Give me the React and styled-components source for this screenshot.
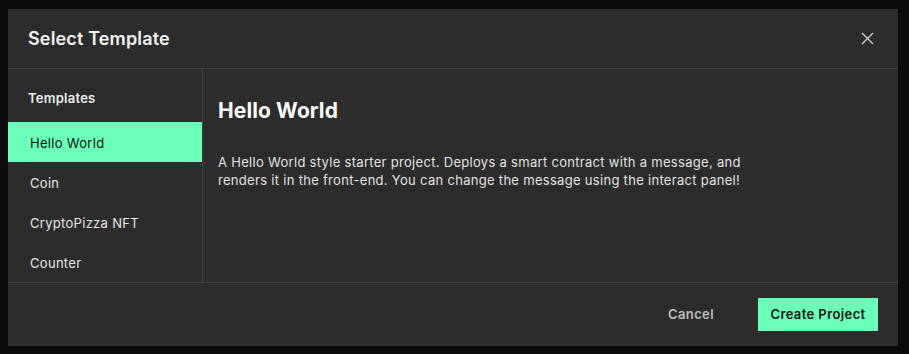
import React from "react";
import styled, { createGlobalStyle } from "styled-components";

const Global = createGlobalStyle`
  *, *::before, *::after { box-sizing: border-box; }
  html, body { margin: 0; padding: 0; background: #0a0a0a; }
  body { font-family: Inter, "Noto Sans", sans-serif; -webkit-font-smoothing: antialiased; }
`;

const Page = styled.div`
  width: 909px;
  height: 354px;
  padding: 9px 11px 8px 8px;
  background: #0a0a0a;
`;

const Modal = styled.div`
  width: 890px;
  height: 337px;
  background: #2c2c2c;
  display: flex;
  flex-direction: column;
  color: #fff;
`;

const Header = styled.div`
  height: 60px;
  flex: none;
  display: flex;
  align-items: center;
  justify-content: space-between;
  padding: 0 21px 1px 20px;
  border-bottom: 1px solid #3f3f3f;
`;

const Title = styled.h2`
  margin: 0;
  font-size: 18px;
  font-weight: 600;
  letter-spacing: 0.15px;
  color: #f2f2f2;
`;

const Close = styled.button`
  background: none;
  border: none;
  padding: 0;
  width: 20px;
  height: 20px;
  display: flex;
  align-items: center;
  justify-content: center;
  cursor: pointer;
`;

const Body = styled.div`
  flex: 1;
  display: flex;
  min-height: 0;
`;

const Sidebar = styled.nav`
  width: 195px;
  flex: none;
  border-right: 1px solid #3f3f3f;
  display: flex;
  flex-direction: column;
  padding-top: 19px;
`;

const SideLabel = styled.div`
  font-size: 13px;
  font-weight: 600;
  letter-spacing: 0.25px;
  color: #ececec;
  padding-left: 20px;
  line-height: 20px;
  margin-bottom: 14px;
`;

const Item = styled.div`
  height: 40px;
  display: flex;
  align-items: center;
  padding: 1px 0 0 22px;
  font-size: 13px;
  letter-spacing: 0.3px;
  color: ${(p) => (p.$active ? "#111" : "#e6e6e6")};
  background: ${(p) => (p.$active ? "#6cffb8" : "transparent")};
  cursor: pointer;
`;

const Content = styled.section`
  flex: 1;
  padding: 28px 16px 0 15px;
`;

const Heading = styled.h3`
  margin: 0;
  font-size: 21px;
  font-weight: 700;
  letter-spacing: 0.1px;
  line-height: 28px;
  color: #fafafa;
`;

const Desc = styled.p`
  margin: 28px 0 0;
  font-size: 13px;
  line-height: 18px;
  letter-spacing: 0.3px;
  color: #e2e2e2;
  max-width: 540px;
`;

const Footer = styled.div`
  height: 64px;
  flex: none;
  border-top: 1px solid #3f3f3f;
  display: flex;
  align-items: center;
  justify-content: flex-end;
  padding: 0 20px 1px;
  gap: 44px;
`;

const Cancel = styled.button`
  background: none;
  border: none;
  color: #bdbdbd;
  font-family: inherit;
  font-size: 13px;
  font-weight: 600;
  letter-spacing: 0.4px;
  padding: 0;
  cursor: pointer;
`;

const Primary = styled.button`
  width: 120px;
  height: 33px;
  border: none;
  background: #6cffb8;
  color: #111;
  font-family: inherit;
  font-size: 13px;
  font-weight: 600;
  letter-spacing: 0.4px;
  cursor: pointer;
`;

const templates = ["Hello World", "Coin", "CryptoPizza NFT", "Counter"];

export default function App() {
  return (
    <>
      <Global />
      <Page>
        <Modal>
          <Header>
            <Title>Select Template</Title>
            <Close aria-label="Close">
              <svg width="13" height="13" viewBox="0 0 13 13">
                <path d="M1 1L12 12M12 1L1 12" stroke="#cfcfcf" strokeWidth="1.4" />
              </svg>
            </Close>
          </Header>
          <Body>
            <Sidebar>
              <SideLabel>Templates</SideLabel>
              {templates.map((t, i) => (
                <Item key={t} $active={i === 0}>{t}</Item>
              ))}
            </Sidebar>
            <Content>
              <Heading>Hello World</Heading>
              <Desc>
                A Hello World style starter project. Deploys a smart contract with a message, and
                renders it in the front-end. You can change the message using the interact panel!
              </Desc>
            </Content>
          </Body>
          <Footer>
            <Cancel>Cancel</Cancel>
            <Primary>Create Project</Primary>
          </Footer>
        </Modal>
      </Page>
    </>
  );
}
